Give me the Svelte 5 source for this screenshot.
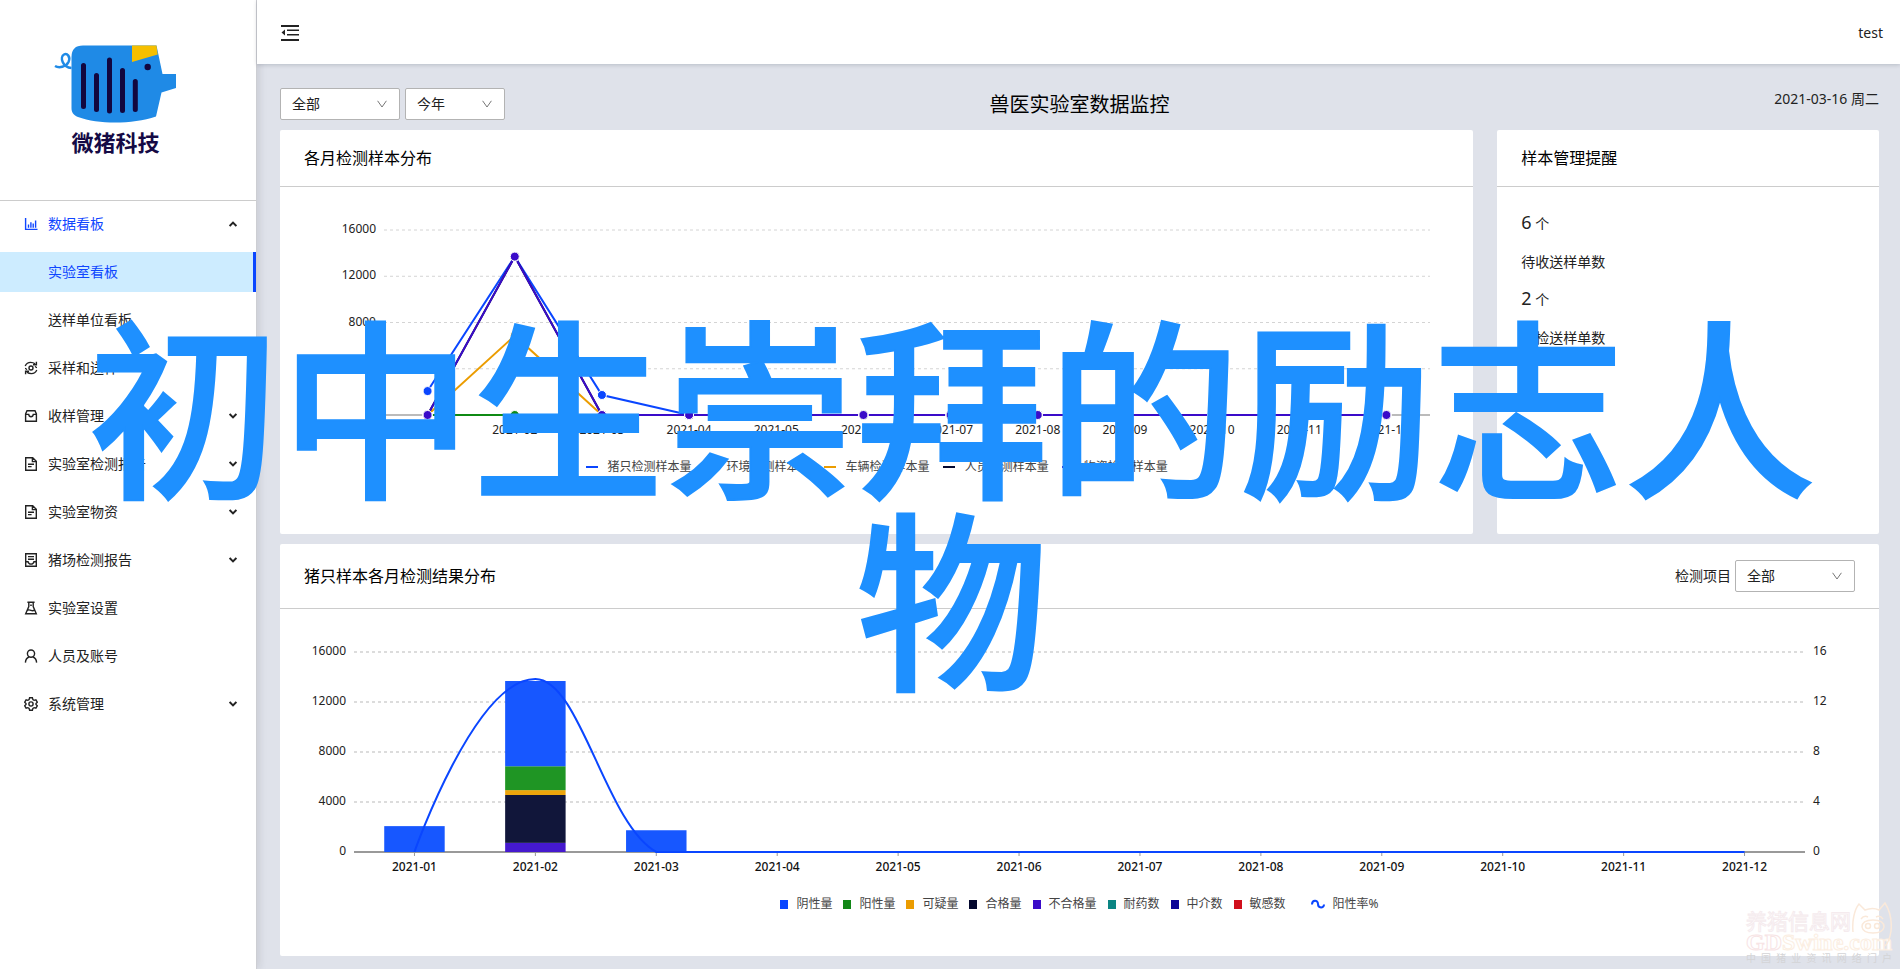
<script lang="ts">
  interface MenuItem {
    icon: string;
    label: string;
    arrow?: boolean;
    open?: boolean;
    children?: string[];
  }

  interface Series {
    name: string;
    color: string;
    data: number[];
  }

  const menu: MenuItem[] = [
    { icon: 'chart', label: '数据看板', arrow: true, open: true, children: ['实验室看板', '送样单位看板'] },
    { icon: 'sample', label: '采样和送样' },
    { icon: 'inbox', label: '收样管理', arrow: true },
    { icon: 'file', label: '实验室检测报告', arrow: true },
    { icon: 'file', label: '实验室物资', arrow: true },
    { icon: 'report', label: '猪场检测报告', arrow: true },
    { icon: 'flask', label: '实验室设置' },
    { icon: 'user', label: '人员及账号' },
    { icon: 'setting', label: '系统管理', arrow: true },
  ];

  const months = Array.from({ length: 12 }, (_, i) => `2021-${String(i + 1).padStart(2, '0')}`);
  const ticks = [16000, 12000, 8000, 4000, 0];

  function pad(values: number[]): number[] {
    return months.map((_, i) => values[i] ?? 0);
  }

  const lineSeries: Series[] = [
    { name: '猪只检测样本量', color: '#0a46ff', data: pad([2070, 13700, 1730]) },
    { name: '环境检测样本量', color: '#0f8a14', data: pad([]) },
    { name: '车辆检测样本量', color: '#eb9c00', data: pad([0, 6860, 0]) },
    { name: '人员检测样本量', color: '#04082e', data: pad([0, 13700, 0]) },
    { name: '物资检测样本量', color: '#3a0bc9', data: pad([0, 13700, 0]) },
  ];

  const barLegend = [
    { name: '阴性量', color: '#0a46ff' },
    { name: '阳性量', color: '#128717' },
    { name: '可疑量', color: '#eb9c00' },
    { name: '合格量', color: '#04082e' },
    { name: '不合格量', color: '#3a0bc9' },
    { name: '耐药数', color: '#0b8583' },
    { name: '中介数', color: '#0c0596' },
    { name: '敏感数', color: '#d10f1c' },
  ];

  // stacked from the axis upwards
  const bars = [
    { month: 0, from: 0, to: 2070, color: '#1757ff' },
    { month: 1, from: 0, to: 730, color: '#4519ce' },
    { month: 1, from: 730, to: 4560, color: '#11163a' },
    { month: 1, from: 4560, to: 4950, color: '#eda50c' },
    { month: 1, from: 4950, to: 6860, color: '#1f9524' },
    { month: 1, from: 6860, to: 13680, color: '#1757ff' },
    { month: 2, from: 0, to: 1740, color: '#1757ff' },
  ];

  let scope = $state('全部');
  let period = $state('今年');
  let project = $state('全部');
  let current = $state('实验室看板');

  let lineWidth = $state(1193);
  let barWidth = $state(1599);

  const lineLeft = 104;
  const lineBase = 228;
  let lineRight = $derived(lineWidth - 43);
  let lineStep = $derived((lineRight - lineLeft) / 12);
  const lineX = (i: number) => lineLeft + lineStep * (i + 0.5);
  const lineY = (v: number) => lineBase - (v / 16000) * 185;

  const barLeft = 74;
  const barBase = 243;
  let barRight = $derived(barWidth - 74);
  let barStep = $derived((barRight - barLeft) / 12);
  const barX = (i: number) => barLeft + barStep * (i + 0.5);
  const barY = (v: number) => barBase - (v / 16000) * 200;

  let ratePath = $derived(
    `M${barX(0)} ${barBase} C${barX(0)} ${barBase} ${barX(0.5)} 70 ${barX(1)} 70 ` +
      `C${barX(1.37)} 70 ${barX(1.58)} 215 ${barX(2)} ${barBase} L${barX(11)} ${barBase}`
  );
</script>

{#snippet icon(name: string)}
  <svg class="icon" viewBox="0 0 14 14" fill="none" stroke="currentColor" stroke-width="1.4">
    {#if name === 'chart'}
      <path d="M1.6 1v11.4H13.5" />
      <path d="M4.5 10.8V7.6M6.9 10.8V5.2M9.2 10.8V6.6M11.6 10.8V3.4" />
    {:else if name === 'sample'}
      <circle cx="7" cy="7" r="2" />
      <path d="M1.200 5C2.400 2.400 4.400 1.400 6.600 1.400c1.800 0 3.200.5 4.600 1.400M12.800 9c-1.200 2.600-3.200 3.600-5.400 3.600-1.800 0-3.200-.5-4.600-1.400" />
      <path d="M12.400.8v3H9M1.600 13.200v-3H5M1 7.400c1 0 1.400.6 1.800 1.400M13 6.600c-1 0-1.400-.6-1.800-1.400" />
    {:else if name === 'inbox'}
      <path d="M3 1.800h8l1.400 3.200v7.200H1.600V5zM1.600 5.400h3.100c.2 1.600 1.100 2.300 2.300 2.300s2.100-.7 2.300-2.300h3.100" />
    {:else if name === 'file'}
      <path d="M1.700.7h7l3.600 3.600v9H1.700zM8.400 1v3.600h3.800M4 7.200h6M4 9.600h3.600" />
    {:else if name === 'report'}
      <path d="M1.700.7h10.600v12.600H1.700zM4 3.600h6M4 6.200h6M1.900 8.800h2.200c.4 1.600 1.400 2.300 2.900 2.300s2.500-.7 2.900-2.300h2.200" />
    {:else if name === 'flask'}
      <path d="M3.400 1.200h7.200M4.800 1.400v4.200L1.700 12.700h10.600L9.200 5.600V1.400M3.200 9.400c1.400-1 2.600-.6 3.800 0s2.200.6 3.600-.2" />
      <path d="M6.200 4.300h1.600" />
    {:else if name === 'user'}
      <circle cx="7" cy="4.600" r="3.600" />
      <path d="M1.400 13.600c.2-3 1.700-4.800 3.600-5.600M12.600 13.600c-.2-3-1.700-4.800-3.600-5.600" />
    {:else if name === 'setting'}
      <circle cx="7" cy="7" r="2.100" />
      <path d="M5.600.8h2.800l.5 1.800 1.200.7 1.800-.5 1.400 2.400L12 6.500v1l1.300 1.300-1.400 2.400-1.800-.5-1.200.7-.5 1.800H5.600l-.5-1.800-1.200-.7-1.800.5L.7 8.800 2 7.500v-1L.7 5.200l1.400-2.400 1.800.5 1.200-.7z" />
    {/if}
  </svg>
{/snippet}

{#snippet down()}
  <svg class="down" viewBox="0 0 10 8" fill="none" stroke="currentColor" aria-hidden="true">
    <path d="M.6.8 5 7 9.400.8" />
  </svg>
{/snippet}

<div class="layout">
  <aside class="sider">
    <div class="logo">
      <svg class="pig" viewBox="54 44 123 80" aria-hidden="true">
        <path
          d="M83 45.500H156.500L162.500 74H176V88L161.500 92.500 156 116.500C132 124.500 99 124.500 78 117 73 115 71.500 112 71.500 108V57Q71.500 45.500 83 45.500Z"
          fill="#1f8ae6"
        />
        <path d="M132 45.500h24.500l1.200 9L132 62z" fill="#f6bf00" />
        <path
          d="M55 66c4 2.500 11 1 13.500-4 2.500-5.500-1.500-9-4.500-7.500-4.500 2.500-1.500 13 7.500 13.500"
          fill="none"
          stroke="#1f8ae6"
          stroke-width="2.500"
        />
        <path
          d="M83.500 65.500v41M96.500 75.500v34M109.500 60v51M122.500 70.500v40M135.300 81.500v28"
          stroke="#12063f"
          stroke-width="5"
          stroke-linecap="round"
        />
        <circle cx="147.700" cy="67" r="3.200" fill="#12063f" />
      </svg>
      <strong>微猪科技</strong>
    </div>

    <nav class="menu">
      {#each menu as item}
        <button class="menu-item" class:open={item.open}>
          {@render icon(item.icon)}
          <span>{item.label}</span>
          {#if item.arrow}
            <svg class="arrow" class:up={item.open} viewBox="0 0 8 6" fill="none" stroke="currentColor" stroke-width="2">
              <path d="M.6 1 4 4.400 7.400 1" />
            </svg>
          {/if}
        </button>
        {#each item.children ?? [] as child}
          <button class="menu-item sub" class:active={child === current} onclick={() => (current = child)}>
            {child}
          </button>
        {/each}
      {/each}
    </nav>
  </aside>

  <div class="page">
    <header class="topbar">
      <button class="fold" aria-label="收起菜单">
        <svg viewBox="0 0 18 18" fill="currentColor">
          <path d="M0 1h18v2H0zM6 5.500h12V7H6zM6 10h12v1.500H6zM0 15h18v2H0zM4 5.500v6L.5 8.500z" />
        </svg>
      </button>
      <span>test</span>
    </header>

    <main class="content">
      <div class="toolbar">
        <div class="filters">
          <div class="select">
            <select aria-label="范围" bind:value={scope}>
              <option>全部</option>
            </select>
            {@render down()}
          </div>
          <div class="select narrow">
            <select aria-label="时间" bind:value={period}>
              <option>今年</option>
            </select>
            {@render down()}
          </div>
        </div>
        <h1>兽医实验室数据监控</h1>
        <time datetime="2021-03-16">2021-03-16 周二</time>
      </div>

      <div class="row">
        <section class="card wide">
          <div class="card-head"><h2>各月检测样本分布</h2></div>
          <div class="chart lines" bind:clientWidth={lineWidth}>
            <svg width={lineWidth} height="270">
              {#each ticks as tick}
                {#if tick > 0}
                  <line class="grid" x1={lineLeft} x2={lineRight} y1={lineY(tick)} y2={lineY(tick)} />
                {/if}
                <text x={lineLeft - 8} y={lineY(tick) + 3} text-anchor="end">{tick}</text>
              {/each}
              <line class="axis light" x1={lineLeft} x2={lineRight} y1={lineBase} y2={lineBase} />
              {#each months as month, i}
                <text x={lineX(i)} y={lineBase + 19} text-anchor="middle">{month}</text>
              {/each}
              {#each lineSeries as series}
                <polyline
                  points={series.data.map((v, i) => `${lineX(i)},${lineY(v)}`).join(' ')}
                  fill="none"
                  stroke={series.color}
                  stroke-width="2"
                />
              {/each}
              {#each lineSeries as series}
                {#each series.data as value, i}
                  <circle class="dot" cx={lineX(i)} cy={lineY(value)} r="4.500" fill={series.color} />
                {/each}
              {/each}
            </svg>
            <ul class="legend">
              {#each lineSeries as series}
                <li>
                  <i class="dash" style="background: {series.color}"></i>
                  {series.name}
                </li>
              {/each}
            </ul>
          </div>
        </section>

        <section class="card">
          <div class="card-head"><h2>样本管理提醒</h2></div>
          <div class="remind">
            <p><b>6</b> 个</p>
            <p>待收送样单数</p>
            <p><b>2</b> 个</p>
            <p>待检送样单数</p>
          </div>
        </section>
      </div>

      <section class="card">
        <div class="card-head tall">
          <h2>猪只样本各月检测结果分布</h2>
          <div class="project">
            <label for="project">检测项目</label>
            <div class="select">
              <select id="project" bind:value={project}>
                <option>全部</option>
              </select>
              {@render down()}
            </div>
          </div>
        </div>
        <div class="chart bars" bind:clientWidth={barWidth}>
          <svg width={barWidth} height="285">
            {#each ticks as tick}
              {#if tick > 0}
                <line class="grid thick" x1={barLeft} x2={barRight} y1={barY(tick)} y2={barY(tick)} />
              {/if}
              <text x={barLeft - 8} y={barY(tick) + 3} text-anchor="end">{tick}</text>
              <text x={barRight + 8} y={barY(tick) + 3}>{tick / 1000}</text>
            {/each}
            <line class="axis" x1={barLeft} x2={barRight} y1={barBase} y2={barBase} />
            {#each months as month, i}
              <line class="tick" x1={barX(i)} x2={barX(i)} y1={barBase} y2={barBase + 4} />
              <text class="month" x={barX(i)} y={barBase + 19} text-anchor="middle">{month}</text>
            {/each}
            {#each bars as bar}
              <rect
                x={barX(bar.month) - barStep / 4}
                y={barY(bar.to)}
                width={barStep / 2}
                height={barY(bar.from) - barY(bar.to)}
                fill={bar.color}
              />
            {/each}
            <path d={ratePath} fill="none" stroke="#0a46ff" stroke-width="2" />
          </svg>
          <ul class="legend compact">
            {#each barLegend as entry}
              <li>
                <i class="square" style="background: {entry.color}"></i>
                {entry.name}
              </li>
            {/each}
            <li class="rate">
              <svg width="14" height="10" viewBox="0 0 14 10" fill="none" stroke="#0a46ff" stroke-width="2">
                <path d="M1 5.500C1 .5 7 .5 7 5s6 4.500 6 .5" />
              </svg>
              阳性率%
            </li>
          </ul>
        </div>
      </section>
    </main>
  </div>

  <div class="banner">初中生崇拜的励志人物</div>

  <div class="mark">
    <span class="mark-name">养猪信息网</span>
    <span class="mark-site"><em>GD</em>Swine.com</span>
    <span class="mark-desc">中国猪业资讯网络门户</span>
    <svg class="mark-pig" viewBox="0 0 40 46" fill="none" stroke="#fae9da" stroke-width="1.500">
      <path d="M1 30C0 20 2 8 7 2l6 6c5-2 10-2 14 0l6-7c5 8 7 18 6 28-1 7-3 12-6 15" />
      <path d="M9 17q3-4 7-2M24 15q4-2 7 2M10 25q0-7 11-7t11 7q-1 6-11 6t-11-6z" />
      <circle cx="16" cy="24" r="2.500" />
      <circle cx="25" cy="24" r="2.500" />
    </svg>
  </div>
</div>

<style>
  :global(body) {
    font-family: 'Noto Sans', 'Noto Sans CJK SC', sans-serif;
    font-size: 14px;
    line-height: 22px;
    color: #222;
    background: #dfe2ea;
  }

  .layout {
    position: relative;
    display: flex;
    min-height: 100vh;
    overflow: hidden;
  }

  button,
  select {
    font: inherit;
    color: inherit;
  }

  button {
    border: 0;
    background: none;
    cursor: pointer;
  }

  .sider {
    position: relative;
    z-index: 1;
    flex: none;
    box-sizing: border-box;
    width: 257px;
    background: #fff;
    border-right: 1px solid #cdced3;
    box-shadow: 2px 0 8px rgba(29, 35, 41, 0.12);
  }

  .logo {
    box-sizing: border-box;
    display: flex;
    flex-direction: column;
    align-items: flex-start;
    height: 201px;
    padding: 44px 0 0 54px;
    border-bottom: 1px solid #ccc;
  }

  .pig {
    width: 123px;
    height: 80px;
  }

  .logo strong {
    width: 123px;
    margin-top: 6px;
    text-align: center;
    font-size: 22px;
    font-weight: 700;
    line-height: 24px;
    color: #150a45;
  }

  .menu {
    padding: 3px 0;
  }

  .menu-item {
    display: flex;
    align-items: center;
    gap: 10px;
    box-sizing: border-box;
    width: 100%;
    height: 40px;
    margin-bottom: 8px;
    padding: 0 19px 0 24px;
    text-align: left;
  }

  .menu-item.open {
    color: #0f46ff;
  }

  .menu-item.sub {
    padding-left: 48px;
  }

  .menu-item.active {
    color: #0f46ff;
    background: #cdecff;
    border-right: 3px solid #0a46ff;
  }

  .icon {
    flex: none;
    width: 14px;
    height: 14px;
  }

  .arrow {
    width: 8px;
    height: 6px;
    margin-left: auto;
    color: #222;
  }

  .arrow.up {
    transform: rotate(180deg);
  }

  .page {
    flex: 1;
    min-width: 0;
  }

  .topbar {
    position: relative;
    z-index: 2;
    box-sizing: border-box;
    display: flex;
    align-items: center;
    justify-content: space-between;
    height: 64px;
    padding: 2px 17px 0 24px;
    background: #fff;
    box-shadow: 0 1px 4px rgba(0, 21, 41, 0.18);
  }

  .fold {
    padding: 0;
    line-height: 0;
  }

  .fold svg {
    width: 18px;
    height: 18px;
  }

  .content {
    padding: 24px 21px 13px 23px;
  }

  .toolbar {
    display: grid;
    grid-template-columns: 1fr auto 1fr;
    margin-bottom: 8px;
  }

  .filters {
    display: flex;
    gap: 5px;
  }

  .select {
    position: relative;
    width: 120px;
    height: 32px;
  }

  .select.narrow {
    width: 100px;
  }

  .select select {
    appearance: none;
    box-sizing: border-box;
    width: 100%;
    height: 100%;
    padding: 0 28px 0 11px;
    border: 1px solid #b3b3b3;
    border-radius: 2px;
    background: #fff;
  }

  .down {
    position: absolute;
    top: 12px;
    right: 13px;
    width: 10px;
    height: 8px;
    color: #777;
    pointer-events: none;
  }

  h1,
  h2 {
    margin: 0;
    font-weight: 400;
    color: #000;
  }

  h1 {
    font-size: 20px;
    line-height: 34px;
  }

  h2 {
    font-size: 16px;
    line-height: 24px;
  }

  time {
    text-align: right;
  }

  .row {
    display: grid;
    grid-template-columns: repeat(4, 1fr);
    gap: 24px;
    margin-bottom: 10px;
  }

  .card {
    min-width: 0;
    background: #fff;
    border-radius: 2px;
  }

  .card.wide {
    grid-column: span 3;
  }

  .card-head {
    display: flex;
    align-items: center;
    justify-content: space-between;
    height: 56px;
    padding: 0 24px;
    border-bottom: 1px solid #ccc;
  }

  .card-head.tall {
    height: 64px;
  }

  .project {
    display: flex;
    align-items: center;
    gap: 4px;
  }

  .chart svg {
    display: block;
  }

  .chart.lines {
    padding-bottom: 57px;
  }

  .chart.bars {
    padding-bottom: 42px;
  }

  .chart text {
    font-size: 12px;
    fill: #222;
  }

  .chart .month {
    font-weight: 500;
    fill: #111;
  }

  .grid {
    stroke: #d4d4d4;
    stroke-dasharray: 3 3;
  }

  .grid.thick {
    stroke: #dcdcdc;
    stroke-width: 2;
  }

  .axis {
    stroke: #999;
    stroke-width: 2;
  }

  .axis.light {
    stroke: #bbb;
  }

  .tick {
    stroke: #999;
  }

  .dot {
    stroke: #fff;
  }

  .legend {
    display: flex;
    justify-content: center;
    gap: 13px;
    margin: 0;
    padding: 0;
    list-style: none;
    font-size: 12px;
    line-height: 20px;
    color: #444;
  }

  .legend.compact {
    gap: 11px;
  }

  .legend li {
    display: flex;
    align-items: center;
    gap: 10px;
  }

  .legend.compact li {
    gap: 8px;
  }

  .legend .rate {
    margin-left: 14px;
  }

  .dash {
    width: 12px;
    height: 2px;
  }

  .square {
    width: 8px;
    height: 9px;
  }

  .remind {
    padding: 18px 24px;
  }

  .remind p {
    margin: 0;
    line-height: 38px;
  }

  .remind b {
    font-size: 18px;
    font-weight: 400;
    line-height: 22px;
  }

  .banner {
    position: absolute;
    z-index: 3;
    top: 304px;
    left: 0;
    right: 0;
    padding-left: 4px;
    text-align: center;
    font-family: 'Noto Sans CJK SC', sans-serif;
    font-size: 192px;
    font-weight: 500;
    line-height: 192px;
    color: #1e90ff;
    -webkit-text-stroke: 2px #1e90ff;
    pointer-events: none;
  }

  .mark {
    position: absolute;
    z-index: 3;
    right: 8px;
    bottom: 5px;
    display: flex;
    flex-direction: column;
    width: 146px;
    pointer-events: none;
  }

  .mark-name {
    font-size: 21px;
    line-height: 22px;
    color: #fff;
    -webkit-text-stroke: 1px #f5ebee;
  }

  .mark-site {
    font-family: 'Liberation Serif', serif;
    font-size: 24px;
    font-weight: 700;
    line-height: 20px;
    color: #fff;
    -webkit-text-stroke: 1px #fbeee2;
  }

  .mark-site em {
    font-style: normal;
    -webkit-text-stroke: 1px #f7e4e5;
  }

  .mark-desc {
    font-size: 10px;
    line-height: 12px;
    text-align-last: justify;
    color: #d4d4d6;
  }

  .mark-pig {
    position: absolute;
    top: -8px;
    right: 0;
    width: 40px;
    height: 46px;
  }
</style>
